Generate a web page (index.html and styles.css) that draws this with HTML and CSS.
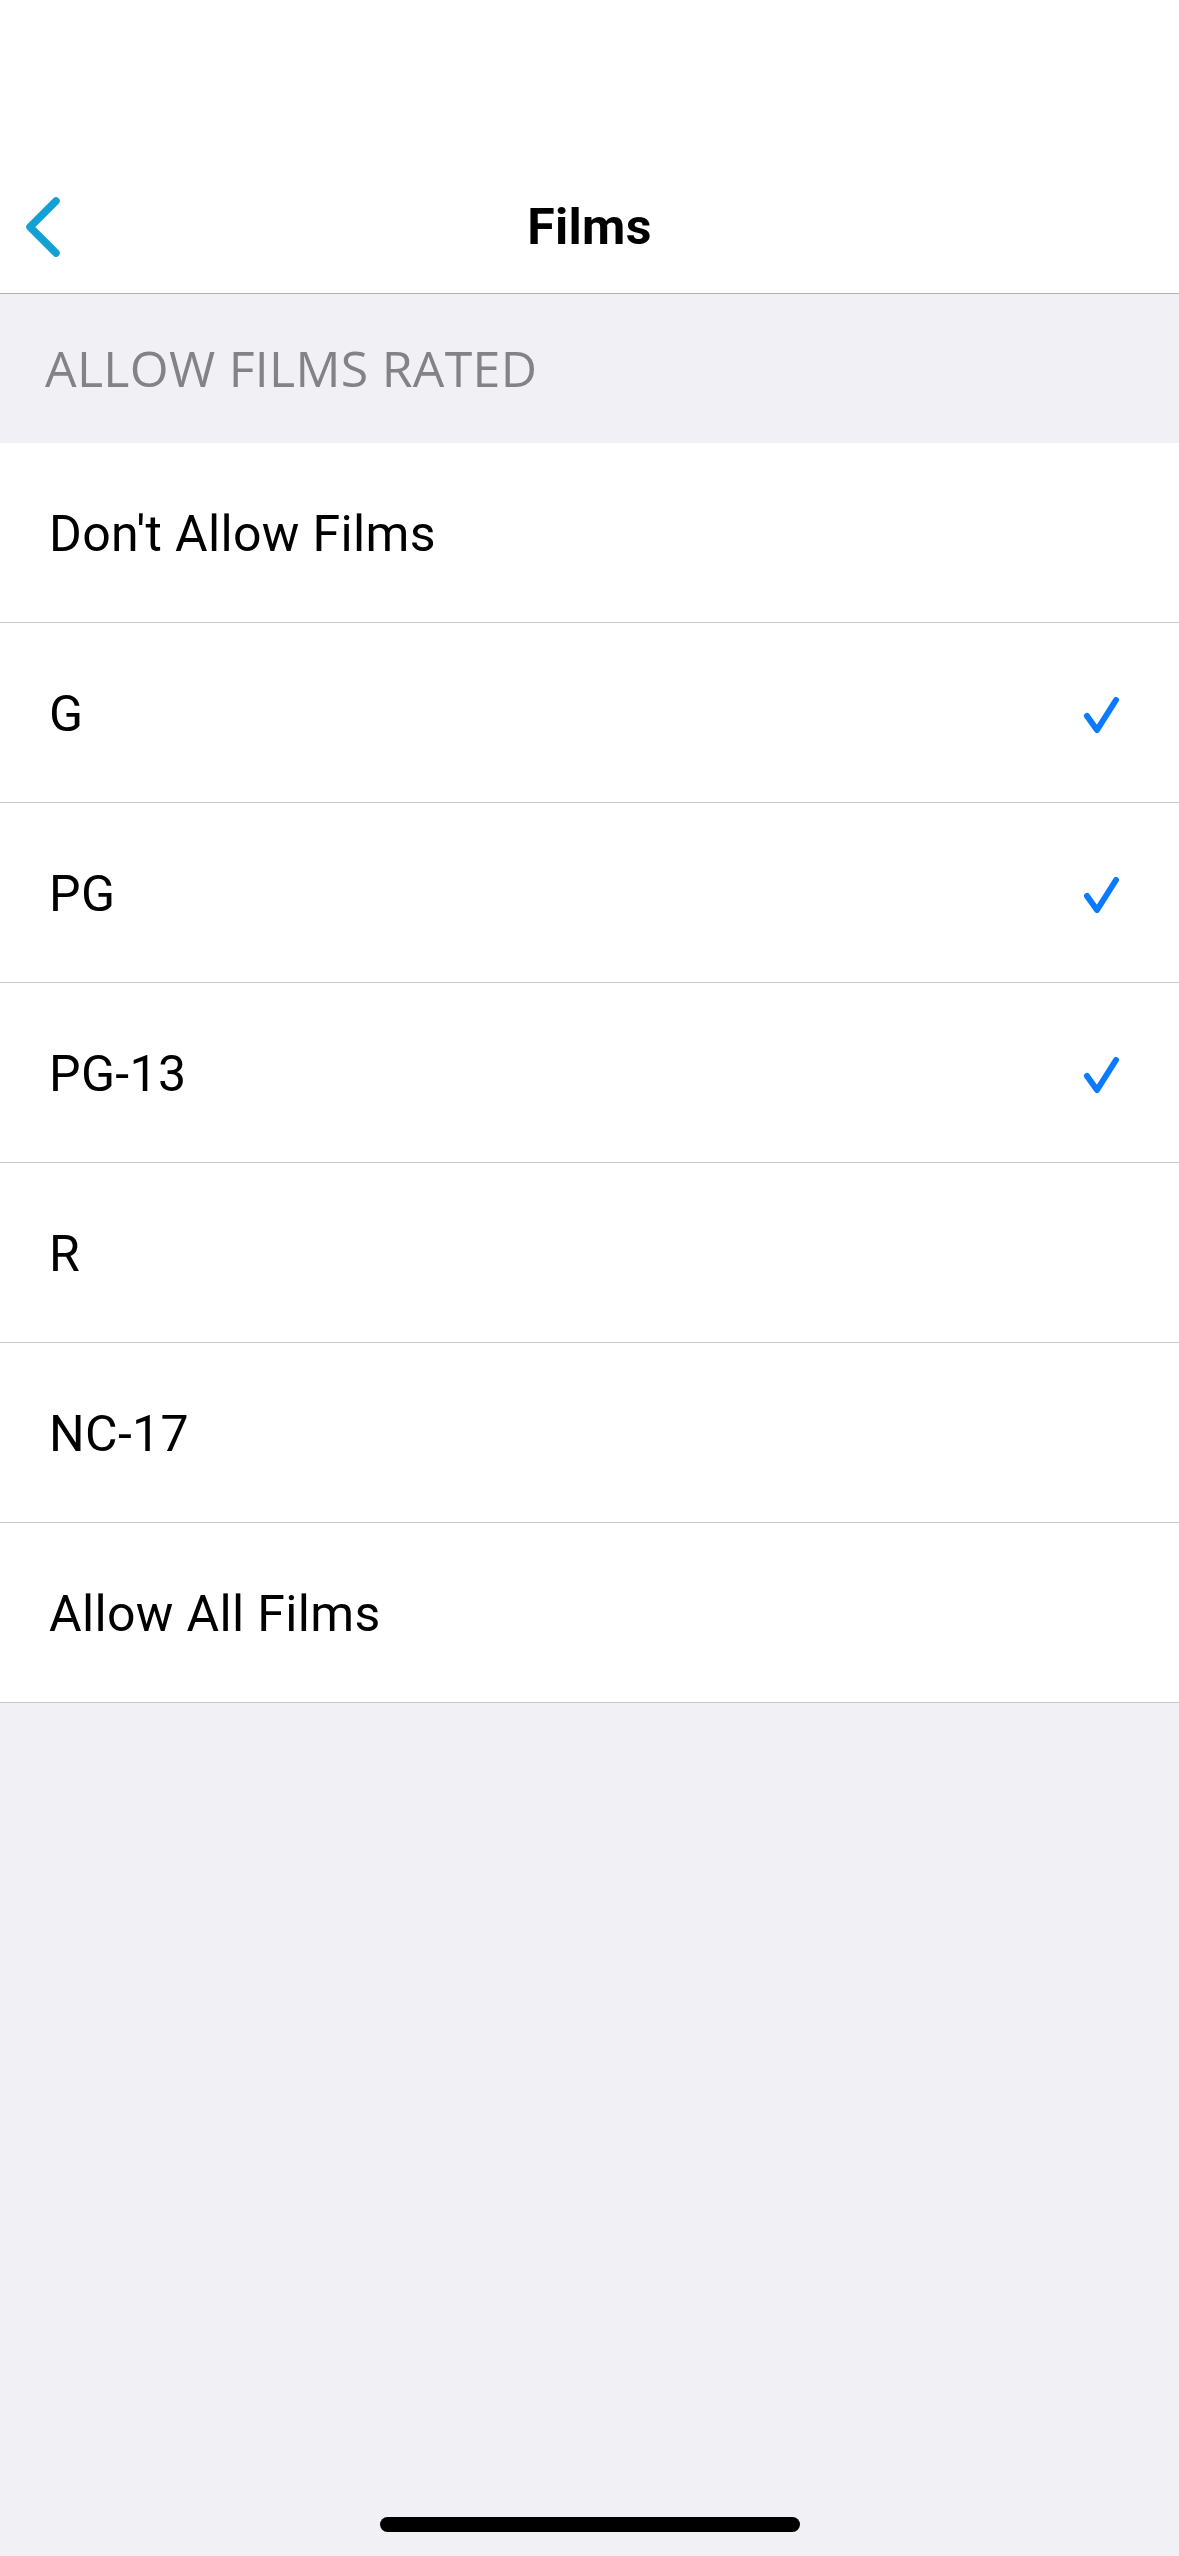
FILE: index.html
```html
<!DOCTYPE html>
<html lang="en">
<head>
<meta charset="utf-8">
<title>Films</title>
<link rel="stylesheet" href="styles.css">
</head>
<body>
<div class="screen">
  <header class="nav">
    <div class="status"></div>
    <div class="bar">
      <button class="back" aria-label="Back">
        <svg width="40" height="60" viewBox="0 0 40 60"><path d="M32 4 L6 30 L32 56" fill="none" stroke="#12a1d4" stroke-width="7.5" stroke-linecap="round" stroke-linejoin="round"/></svg>
      </button>
      <h1 class="title">Films</h1>
      <div class="spacer"></div>
    </div>
  </header>
  <div class="section-header">ALLOW FILMS RATED</div>
  <ul class="list">
    <li class="row"><span class="label">Don't Allow Films</span></li>
    <li class="row"><span class="label">G</span><svg class="check" width="40" height="40" viewBox="0 0 40 40"><path d="M6 22 L16 36 L35 6" fill="none" stroke="#0a7aff" stroke-width="6" stroke-linecap="round" stroke-linejoin="round"/></svg></li>
    <li class="row"><span class="label">PG</span><svg class="check" width="40" height="40" viewBox="0 0 40 40"><path d="M6 22 L16 36 L35 6" fill="none" stroke="#0a7aff" stroke-width="6" stroke-linecap="round" stroke-linejoin="round"/></svg></li>
    <li class="row"><span class="label">PG-13</span><svg class="check" width="40" height="40" viewBox="0 0 40 40"><path d="M6 22 L16 36 L35 6" fill="none" stroke="#0a7aff" stroke-width="6" stroke-linecap="round" stroke-linejoin="round"/></svg></li>
    <li class="row"><span class="label">R</span></li>
    <li class="row"><span class="label">NC-17</span></li>
    <li class="row"><span class="label">Allow All Films</span></li>
  </ul>
  <div class="fill"></div>
  <div class="home-area"><div class="home-indicator"></div></div>
</div>
</body>
</html>
```

FILE: styles.css
```css
* { box-sizing: border-box; }
html, body {
  margin: 0;
  padding: 0;
  background: #f0f0f5;
}
body {
  font-family: Roboto, "Liberation Sans", sans-serif;
  color: #000;
}
.screen {
  width: 1179px;
  height: 2556px;
  display: flex;
  flex-direction: column;
  background: #f0f0f5;
}
.nav {
  background: #fff;
  border-bottom: 1px solid #b2b2b2;
  height: 294px;
  display: flex;
  flex-direction: column;
}
.status { height: 160px; }
.bar {
  height: 133px;
  display: flex;
  align-items: center;
  justify-content: space-between;
  padding: 0 24px;
}
.back {
  border: 0;
  background: none;
  padding: 0;
  width: 80px;
  height: 60px;
  display: flex;
  align-items: center;
  justify-content: flex-start;
}
.spacer { width: 80px; }
.title {
  margin: 0;
  font-family: Roboto, "Liberation Sans", sans-serif;
  font-weight: 700;
  font-size: 50px;
  letter-spacing: 0.3px;
}
.section-header {
  height: 149px;
  display: flex;
  align-items: center;
  padding-left: 45px;
  font-family: "Open Sans", "Noto Sans", sans-serif;
  font-size: 50px;
  letter-spacing: 0.3px;
  color: #838387;
  padding-bottom: 1px;
}
.list {
  list-style: none;
  margin: 0;
  padding: 0;
  background: #fff;
}
.row {
  height: 180px;
  border-bottom: 1px solid #c8c8cc;
  display: flex;
  align-items: center;
  justify-content: space-between;
  padding: 3px 58px 0 49px;
}
.label {
  font-size: 50px;
  font-weight: 400;
  letter-spacing: 0.35px;
}
.check { display: block; margin-top: -1px; }
.fill { flex: 1; }
.home-area {
  height: 56px;
  padding-top: 17px;
  display: flex;
  justify-content: center;
  align-items: flex-start;
}
.home-indicator {
  width: 420px;
  height: 15px;
  border-radius: 8px;
  background: #000;
}
```
